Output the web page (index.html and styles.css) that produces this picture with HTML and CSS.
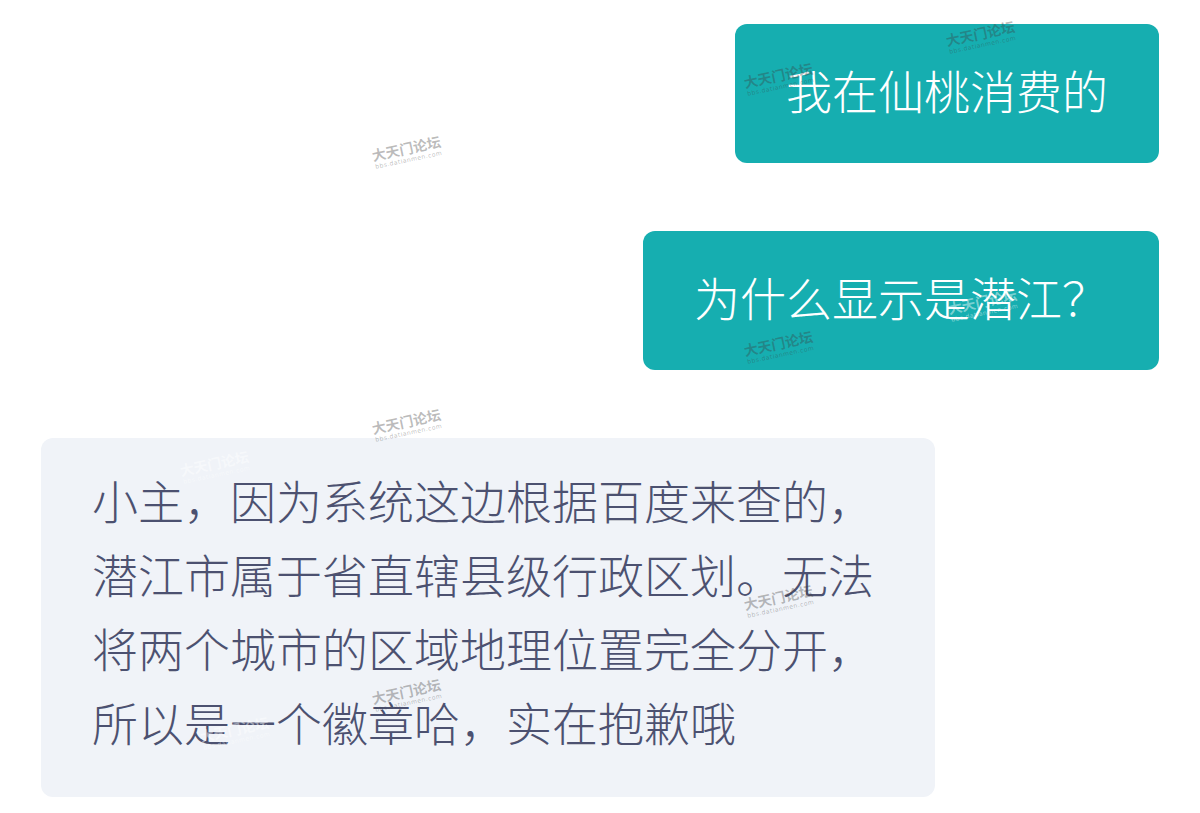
FILE: index.html
```html
<!DOCTYPE html>
<html lang="zh-CN">
<head>
    <meta charset="UTF-8">
    <meta name="viewport" content="width=device-width, initial-scale=1.0">
    <title>聊天记录</title>
    <link rel="stylesheet" href="styles.css">
</head>
<body>
    <div class="chat">
        <div class="bubble mine">我在仙桃消费的</div>
        <div class="bubble mine">为什么显示是潜江？</div>
        <div class="bubble theirs">小主，因为系统这边根据百度来查的，潜江市属于省直辖县级行政区划。无法将两个城市的区域地理位置完全分开，所以是一个徽章哈，实在抱歉哦</div>
    </div>

    <!-- forum watermarks over the screenshot -->
    <div class="mark" style="left: 372px; top: 141px;"><b>大天门论坛</b><span>bbs.datianmen.com</span></div>
    <div class="mark" style="left: 372px; top: 414px;"><b>大天门论坛</b><span>bbs.datianmen.com</span></div>
    <div class="mark" style="left: 946px; top: 26px;"><b>大天门论坛</b><span>bbs.datianmen.com</span></div>
    <div class="mark" style="left: 744px; top: 68px;"><b>大天门论坛</b><span>bbs.datianmen.com</span></div>
    <div class="mark" style="left: 744px; top: 336px;"><b>大天门论坛</b><span>bbs.datianmen.com</span></div>
    <div class="mark light" style="left: 948px; top: 294px;"><b>大天门论坛</b><span>bbs.datianmen.com</span></div>
    <div class="mark light" style="left: 180px; top: 456px;"><b>大天门论坛</b><span>bbs.datianmen.com</span></div>
    <div class="mark" style="left: 744px; top: 590px;"><b>大天门论坛</b><span>bbs.datianmen.com</span></div>
    <div class="mark" style="left: 372px; top: 684px;"><b>大天门论坛</b><span>bbs.datianmen.com</span></div>
    <div class="mark light" style="left: 200px; top: 722px;"><b>大天门论坛</b><span>bbs.datianmen.com</span></div>
</body>
</html>
```

FILE: styles.css
```css
body {
    margin: 0;
    background-color: #ffffff;
    font-family: "Noto Sans CJK SC", "Noto Sans", sans-serif;
    position: relative;
}
.chat {
    display: flex;
    flex-direction: column;
    gap: 68px;
    padding: 24px 41px 17px;
}
.bubble {
    font-size: 46px;
    font-weight: 300;
    line-height: 74px;
    border-radius: 12px;
}
.mine {
    align-self: flex-end;
    background-color: #16aeb0;
    color: #ffffff;
    padding: 28px 51px 37px;
}
.theirs {
    align-self: flex-start;
    width: 792px;
    background-color: #f0f3f8;
    color: #4c5170;
    padding: 24px 51px 39px;
}
.mark {
    position: absolute;
    display: flex;
    flex-direction: column;
    align-items: center;
    transform: rotate(-12deg);
    color: rgba(60, 60, 60, 0.35);
    font-family: "Noto Sans CJK SC", sans-serif;
    line-height: 1;
}
.mark b {
    font-size: 14px;
    font-weight: 700;
}
.mark span {
    font-family: "DejaVu Sans", sans-serif;
    font-size: 6px;
    margin-top: 2px;
    letter-spacing: 0.5px;
}
.mark.light {
    color: rgba(255, 255, 255, 0.45);
}
```
